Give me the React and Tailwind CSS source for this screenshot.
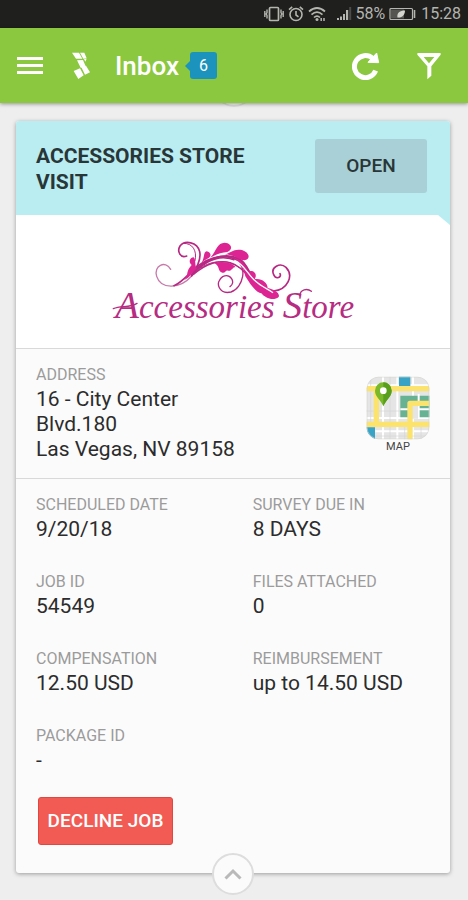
import React from "react";

function StatusBar() {
  return (
    <div className="flex h-7 items-center justify-end bg-[#1f1f1d] pr-[7px] text-[#b4b4b0]">
      <svg className="h-5 w-5" viewBox="0 0 20 20" fill="none" stroke="currentColor" strokeWidth="1.4" aria-hidden="true">
        <rect x="5.5" y="3.5" width="9" height="13" rx="1" strokeWidth="1.700" />
        <path d="M3 5.500v3l-.8 1.500.8 1.500v3M17 5.500v3l.8 1.500-.8 1.500v3M.8 7v6M19.200 7v6" />
      </svg>
      <svg className="ml-1 h-4 w-4" viewBox="0 0 16 16" fill="none" stroke="currentColor" strokeWidth="1.600" aria-hidden="true">
        <circle cx="8" cy="8.500" r="6" />
        <path d="M8 5v4l2.500 1.800M1 3.600l3.200-2.700M15 3.600l-3.200-2.700" />
      </svg>
      <svg className="ml-1 h-4 w-5" viewBox="0 0 20 16" fill="none" stroke="currentColor" strokeWidth="1.700" aria-hidden="true">
        <path d="M1 5.500Q9 -1.500 17 5.500M3.500 8.600Q9 3.600 14.500 8.600M6 11.500Q9 8.700 12 11.500" />
        <circle cx="9" cy="13.500" r="1.500" fill="currentColor" stroke="none" />
        <path d="M13.200 12v3M16 12v3" strokeWidth="1.500" />
      </svg>
      <svg className="ml-2 h-4 w-4" viewBox="0 0 16 16" fill="currentColor" aria-hidden="true">
        <path d="M1 12h2v2H1zM4 10.500h2V14H4zM7 8h2v6H7zM10 4h2.200v10H10z" />
        <path d="M13.200 1h2v13h-2z" opacity=".3" />
      </svg>
      <span className="ml-[3px] text-base leading-5 font-[Roboto,sans-serif]">58%</span>
      <svg className="ml-1 h-4 w-7" viewBox="0 0 28 16" fill="none" stroke="currentColor" aria-hidden="true">
        <rect x="1" y="2.500" width="22.500" height="11" rx="1" strokeWidth="1.200" />
        <path d="M2 3.500h13v9H2z" fill="#555552" stroke="none" />
        <path d="M25.500 4v8" strokeWidth="1.600" />
        <path d="M8.500 11.500C7.500 7 11 4.500 16 4.500C16 9 13 12 8.500 11.500Z" fill="#d5d5d0" stroke="none" />
      </svg>
      <span className="ml-1 text-base leading-5 font-[Roboto,sans-serif]">15:28</span>
    </div>
  );
}

function Header() {
  return (
    <header className="relative z-10 flex h-[75px] items-center bg-[#8bc83f] pr-[27px] pl-[17px] text-white shadow-[0_1px_4px_rgba(0,0,0,0.4)]">
      <button type="button" aria-label="Menu" className="flex w-[26px] flex-col gap-[4px]">
        <span className="h-[3px] w-full bg-white" />
        <span className="h-[3px] w-full bg-white" />
        <span className="h-[3px] w-full bg-white" />
      </button>
      <svg className="ml-[29px] h-7 w-[18px]" viewBox="0 0 54 84" fill="#fff" aria-hidden="true">
        <path d="M0 2h21l10 18H12zM24 2h13l7 17-10 1zM15 25l18-1 8 19-15 4zM36 21l8-1-4 9zM5 57l19-8 11 21-16 11zM28 46l14-5 12 20-15 7z" />
      </svg>
      <h1 className="ml-[25px] text-[26px] leading-8 font-medium">Inbox</h1>
      <div className="ml-[6px] flex items-center">
        <svg className="h-[10px] w-[5px]" viewBox="0 0 5 10" fill="#1c93bd" aria-hidden="true">
          <path d="M5 0v10L0 5z" />
        </svg>
        <span className="flex h-[27px] w-[27px] items-center justify-center rounded-[3px] bg-[#1c93bd] text-base">6</span>
      </div>
      <button type="button" aria-label="Refresh" className="ml-auto">
        <svg className="h-7 w-7" viewBox="0 0 84 84" fill="none" aria-hidden="true">
          <path d="M62 19A33 33 0 1 0 71 56" stroke="#fff" strokeWidth="15" />
          <path d="M74 3l6 29-32-1z" fill="#fff" stroke="#fff" strokeWidth="3" strokeLinejoin="round" />
        </svg>
      </button>
      <button type="button" aria-label="Filter" className="ml-[37px]">
        <svg className="h-7 w-6" viewBox="0 0 72 84" aria-hidden="true">
          <path d="M2 3h68q2 2 1 5L43 43v28L31 82V43L1 8q-1-3 1-5zM20 15l16 19 16-19z" fill="#fff" fillRule="evenodd" />
        </svg>
      </button>
    </header>
  );
}

function StoreLogo() {
  return (
    <svg className="mx-auto h-[100px] w-[270px]" viewBox="0 0 810 300" role="img" aria-label="Accessories Store">
      <g fill="none" stroke="#b62983" strokeLinecap="round">
        <path d="M212 118C196 89 160 108 170 139C183 180 242 176 275 138" stroke="#c77bab" strokeWidth="4" />
        <path d="M275 138C312 95 358 70 407 91C444 107 430 174 393 186C358 194 342 157 368 140C391 129 409 157 390 170" strokeWidth="4" />
        <path d="M260 78C242 86 230 65 240 48C254 30 292 35 299 65C304 88 292 112 274 137" strokeWidth="5" />
        <path d="M250 40C278 39 292 62 285 92" strokeWidth="3" />
        <path d="M222 167C262 150 281 100 340 84C397 70 431 96 448 138C463 169 491 183 520 183C563 180 582 137 558 112C540 96 511 112 521 134C528 150 546 142 540 131" strokeWidth="5" />
        <path d="M276 133C311 86 375 67 415 86C443 99 444 135 475 165C493 181 515 182 532 197" strokeWidth="7" />
        <path d="M282 132C317 102 358 87 393 99C421 107 439 130 454 151" strokeWidth="4" />
        <path d="M303 113C336 91 382 87 416 112" strokeWidth="3" />
      </g>
      <g fill="#dc2492">
        <path d="M331 83C349 64 350 39 374 38C396 40 400 59 382 66C364 67 346 74 331 83Z" />
        <path d="M370 74C394 69 400 55 426 60C449 67 453 89 433 91C416 91 402 71 370 74Z" />
        <path d="M304 99C314 87 309 66 320 64C330 65 337 77 326 84C316 90 312 92 304 99Z" />
        <path d="M275 105C264 96 270 82 281 82C289 91 283 109 291 116C274 126 273 141 253 150C268 134 255 126 275 105Z" />
        <path d="M344 100C361 94 388 94 407 111C397 111 395 125 384 122C375 120 376 133 364 127C353 122 360 109 344 100Z" />
        <path d="M397 82C424 89 438 105 443 125C463 117 474 135 463 148C482 143 503 157 503 174C521 179 540 187 536 201C520 215 494 203 484 190C467 187 451 163 436 139C431 115 421 93 397 82Z" />
      </g>
      <path d="M403 91C433 102 443 134 467 154C483 169 504 177 519 188" fill="none" stroke="#fff" strokeWidth="4" />
      <text x="46" y="263" fontFamily="'Liberation Serif', serif" fontStyle="italic" fontSize="99" fill="#b62c82">
        <tspan fontSize="116">A</tspan>ccessories <tspan fontSize="116">S</tspan>tore
      </text>
      <path d="M40 236C62 225 87 235 111 220M600 196C600 178 622 174 634 184" fill="none" stroke="#b62c82" strokeWidth="4" strokeLinecap="round" />
    </svg>
  );
}

function MapIcon() {
  return (
    <svg className="h-16 w-16" viewBox="0 0 192 192" aria-hidden="true">
      <defs>
        <clipPath id="map-tile">
          <rect x="2" y="2" width="188" height="188" rx="36" />
        </clipPath>
      </defs>
      <g clipPath="url(#map-tile)">
        <path fill="#e5e5e5" d="M0 0h192v192H0z" />
        <path d="M51 0v192M94 0v192M141 0v192M0 126h192M0 166h192M0 28h192" stroke="#fff" strokeWidth="6" />
        <path d="M14 0v192M72 0v192M116 145v47M165 145v47M0 105h192M0 180h192" stroke="#d7d7d7" strokeWidth="2" />
        <path fill="#68b294" d="M103 59h89v65h-89z" />
        <path d="M158 54v74M103 100h89" stroke="#fff" strokeWidth="6" />
        <path fill="#e5e5e5" d="M136 88h20v40h-20z" />
        <path fill="#39a3c5" d="M99 0h34v30H99zM0 154h27v38H0z" />
        <path d="M0 38h192M0 145h192M31 38v107M132 192V82h60" fill="none" stroke="#fbe36d" strokeWidth="16" strokeLinejoin="round" />
        <rect x="3" y="3" width="186" height="186" rx="35" fill="none" stroke="#d4d4d0" strokeWidth="2" />
      </g>
      <path d="M52 91C45 72 27 63 27 44A25 25 0 0 1 77 44C77 63 59 72 52 91Z" fill="#79b929" />
      <path d="M52 91V19A25 25 0 0 1 77 44C77 63 59 72 52 91Z" fill="#589f1b" />
      <circle cx="52" cy="44" r="10" fill="#fff" />
    </svg>
  );
}

function Field({ label, children }) {
  return (
    <div>
      <dt className="text-base leading-6 text-[#9b9b9b]">{label}</dt>
      <dd className="text-[21px] leading-[25px] text-[#2c2c2c]">{children}</dd>
    </div>
  );
}

function Chevron() {
  return (
    <svg className="h-4 w-[18px]" viewBox="0 0 18 16" fill="none" stroke="#b9b9b9" strokeWidth="3" aria-hidden="true">
      <path d="M1.500 12.500L9 5l7.500 7.500" />
    </svg>
  );
}

export default function App() {
  return (
    <div className="min-h-screen bg-[#eeeeee] font-[Roboto,sans-serif]">
      <StatusBar />
      <Header />
      <main className="relative pt-[18px] pr-[18px] pb-7 pl-4">
        <div className="absolute top-[-38px] left-1/2 h-[42px] w-[42px] -translate-x-1/2 rounded-full border-2 border-[#dddddd] bg-[#f8f8f8]" />
        <article className="relative rounded-[3px] bg-[#fbfbfb] shadow-[0_1px_4px_rgba(0,0,0,0.35)]">
          <div className="relative flex items-start justify-between rounded-t-[3px] bg-[#b9edf2] pt-[18px] pr-[23px] pb-[22px] pl-5">
            <h2 className="-mb-1 w-60 pt-1 text-[21px] leading-[26px] font-bold text-[#293638]">ACCESSORIES STORE VISIT</h2>
            <button type="button" className="h-[54px] w-28 rounded-[3px] bg-[#a8d0d6] text-[19px] font-medium text-[#293638]">OPEN</button>
            <svg className="absolute top-full right-0 h-[10px] w-3" viewBox="0 0 12 10" fill="#b9edf2" aria-hidden="true">
              <path d="M0 0h12v10z" />
            </svg>
          </div>
          <div className="border-b border-[#d9d9d9] bg-white pt-[15px] pb-[18px] pl-1">
            <StoreLogo />
          </div>
          <div className="flex justify-between border-b border-[#d9d9d9] pt-[14px] pr-5 pb-4 pl-5">
            <dl>
              <Field label="ADDRESS">
                16 - City Center<br />Blvd.180<br />Las Vegas, NV 89158
              </Field>
            </dl>
            <a href="#map" className="mt-[13px] flex flex-col items-center text-[11px] leading-[14px] text-[#444444]">
              <MapIcon />
              MAP
            </a>
          </div>
          <dl className="grid grid-cols-[11fr_9fr] gap-y-7 px-5 pt-[14px]">
            <Field label="SCHEDULED DATE">9/20/18</Field>
            <Field label="SURVEY DUE IN">8 DAYS</Field>
            <Field label="JOB ID">54549</Field>
            <Field label="FILES ATTACHED">0</Field>
            <Field label="COMPENSATION">12.50 USD</Field>
            <Field label="REIMBURSEMENT">up to 14.50 USD</Field>
            <Field label="PACKAGE ID">-</Field>
          </dl>
          <div className="px-[22px] pt-6 pb-7">
            <button type="button" className="h-12 w-[135px] rounded-[3px] border border-[#e2473f] bg-[#f25b54] text-[19px] font-medium text-white">DECLINE JOB</button>
          </div>
          <button type="button" aria-label="Collapse" className="absolute -bottom-[22px] left-1/2 flex h-[42px] w-[42px] -translate-x-1/2 items-center justify-center rounded-full border-2 border-[#dddddd] bg-[#fbfbfb]">
            <Chevron />
          </button>
        </article>
      </main>
    </div>
  );
}
